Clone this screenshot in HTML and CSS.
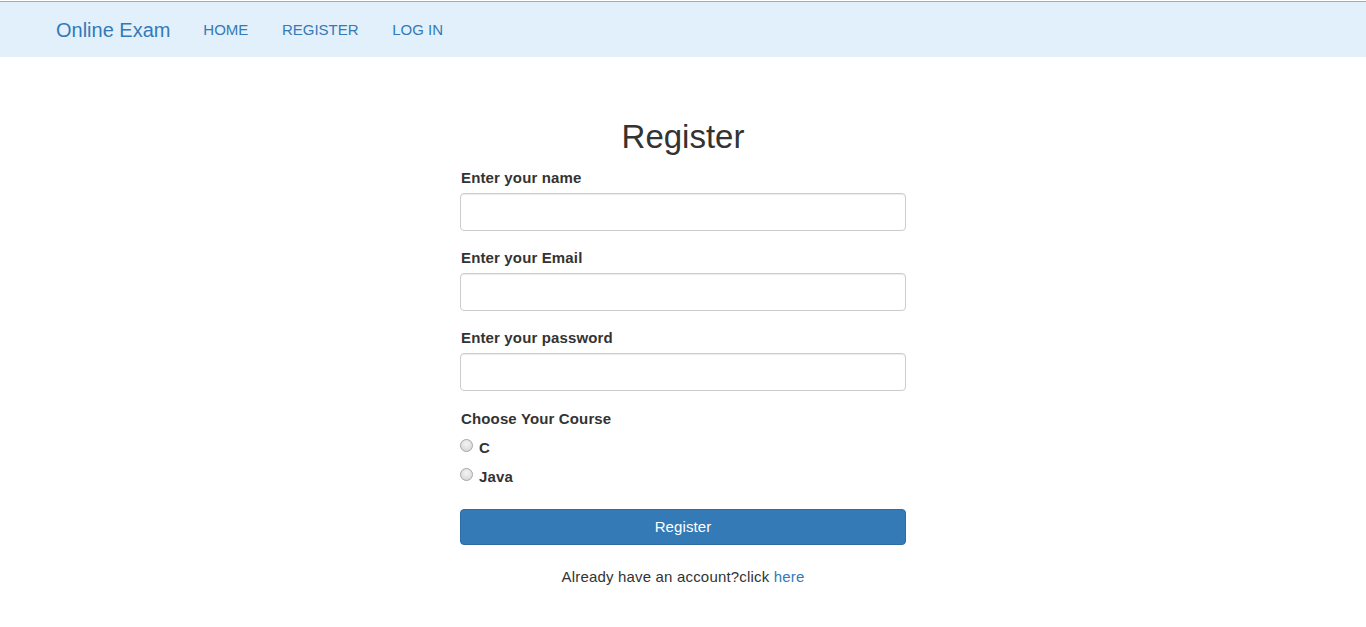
FILE: index.html
```html
<!DOCTYPE html>
<html>
<head>
<meta charset="utf-8">
<link rel="stylesheet" href="styles.css">
</head>
<body>
<nav class="navbar">
  <a class="brand" href="#">Online Exam</a>
  <ul class="nav">
    <li><a href="#">HOME</a></li>
    <li><a href="#">REGISTER</a></li>
    <li><a href="#">LOG IN</a></li>
  </ul>
</nav>
<main class="main">
  <form class="form">
    <h1 class="title">Register</h1>
    <div class="group">
      <label class="label">Enter your name</label>
      <input class="input" type="text">
    </div>
    <div class="group">
      <label class="label">Enter your Email</label>
      <input class="input" type="email">
    </div>
    <div class="group">
      <label class="label">Enter your password</label>
      <input class="input" type="password">
    </div>
    <div class="group course">
      <label class="label">Choose Your Course</label>
      <label class="radio"><input type="radio" name="c"><span>C</span></label>
      <label class="radio"><input type="radio" name="c"><span>Java</span></label>
    </div>
    <button class="btn" type="button">Register</button>
    <p class="footer">Already have an account?click <a href="#">here</a></p>
  </form>
</main>
</body>
</html>
```
FILE: styles.css
```css
* { box-sizing: border-box; }
html, body { margin: 0; padding: 0; background: #fff; }
body { font-family: "Liberation Sans", Arial, sans-serif; color: #333; font-size: 15px; }
a { text-decoration: none; }
.navbar {
  margin-top: 1px;
  border-top: 1px solid #a9a9a9;
  background: #e2f0fb;
  height: 56px;
  display: flex;
  align-items: center;
  padding-left: 56px;
}
.brand { font-size: 20px; color: #337ab7; margin-right: 16px; line-height: 56px; }
.nav { list-style: none; display: flex; margin: 0; padding: 0; }
.nav a { display: block; padding: 0 16.8px; font-size: 15px; color: #337ab7; line-height: 56px; }
.main { display: flex; justify-content: center; }
.form { width: 446px; padding-top: 62px; }
.title { font-size: 33px; font-weight: 400; text-align: center; margin: 0 0 14px; line-height: 36px; color: #333; }
.group { margin-bottom: 18px; }
.label { display: block; font-weight: 700; font-size: 15px; line-height: 17px; margin-bottom: 7px; letter-spacing: 0.14px; padding-left: 1px; }
.input {
  display: block; width: 100%; height: 38px;
  border: 1px solid #ccc; border-radius: 4px;
  box-shadow: inset 0 1px 1px rgba(0,0,0,.075);
  background: #fff;
}
.course { margin-bottom: 0; padding-top: 1px; padding-bottom: 12px; }
.course .label { margin-bottom: 12px; }
.radio { display: flex; align-items: center; font-weight: 700; font-size: 15px; line-height: 17px; margin-bottom: 12px; letter-spacing: 0.14px; }
.radio input {
  -webkit-appearance: none; appearance: none;
  margin: 0 6px 0 0; width: 13px; height: 13px; position: relative; top: -2px;
  border-radius: 50%;
  border: 1px solid #a6a6a6;
  background: radial-gradient(circle at 50% 35%, #f4f4f4 0%, #dcdcdc 70%, #cfcfcf 100%);
}
.btn {
  display: block; width: 100%; height: 36px; padding: 0 0 2px;
  background: #337ab7; border: 1px solid #2e6da4; border-radius: 4px;
  color: #fff; font-family: "Liberation Sans", Arial, sans-serif; font-size: 15px; letter-spacing: 0.1px;
}
.footer { text-align: center; margin: 23px 0 0; font-size: 15px; line-height: 17px; letter-spacing: 0.18px; }
.footer a { color: #337ab7; }
```
